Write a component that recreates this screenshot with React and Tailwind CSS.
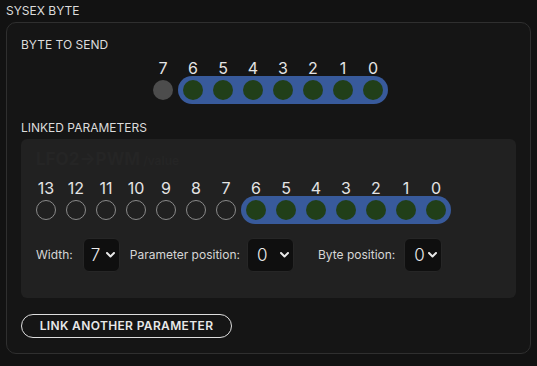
import React from "react";

const topBits = [7, 6, 5, 4, 3, 2, 1, 0];
const paramBits = [13, 12, 11, 10, 9, 8, 7, 6, 5, 4, 3, 2, 1, 0];

function Chevron() {
  return (
    <svg width="9" height="6" viewBox="0 0 9 6" className="shrink-0">
      <polyline points="1,1 4.5,4.5 8,1" fill="none" stroke="#e8e8e8" strokeWidth="2" strokeLinecap="round" strokeLinejoin="round" />
    </svg>
  );
}

function FakeSelect({ value, widthClass, padClass }) {
  return (
    <div className={`h-[34px] ${widthClass} ${padClass} pr-[4px] flex items-center justify-between rounded-[6px] border border-[#262626] bg-[#0f0f0f]`}>
      <span className="text-[17px] font-light leading-none text-[#ececec]">{value}</span>
      <Chevron />
    </div>
  );
}

function Labels({ bits }) {
  return (
    <div className="flex gap-[10px] text-[16px] leading-[16px] text-[#e4e4e4]">
      {bits.map((b, i) => (
        <span key={i} className="w-[20px] text-center">{b}</span>
      ))}
    </div>
  );
}

function Dot({ on, empty }) {
  if (empty) return <div className="w-[20px] h-[20px] rounded-full border border-[#8a8a8a] shrink-0" />;
  if (on) return <div className="w-[20px] h-[20px] rounded-full bg-[#213f19] shrink-0" />;
  return <div className="w-[20px] h-[20px] rounded-full bg-[#4c4c4c] shrink-0" />;
}

function BitRow({ bits, activeCount, emptyStyle }) {
  const inactive = bits.slice(0, bits.length - activeCount);
  const active = bits.slice(bits.length - activeCount);
  return (
    <div>
      <Labels bits={bits} />
      <div className="flex items-center">
        {inactive.map((b, i) => (
          <div key={b} className={i > 0 ? "ml-[10px]" : ""}>
            <Dot empty={emptyStyle} />
          </div>
        ))}
        <div className="ml-[5px] h-[28px] px-[5px] flex items-center gap-[10px] rounded-full bg-[#385a9b]">
          {active.map((b) => (
            <Dot key={b} on />
          ))}
        </div>
      </div>
    </div>
  );
}

export default function App() {
  return (
    <div className="w-[537px] h-[366px] bg-[#121212] font-['Inter','Noto_Sans',sans-serif] text-[#dcdcdc] pt-[2px]">
      <div className="px-[6px] text-[12px] leading-[18px]">SYSEX BYTE</div>
      <div className="mx-[6px] mt-[2px] h-[332px] rounded-[10px] border border-[#2f2f2f] bg-[#151515] px-[14px] pt-[13px]">
        <div className="text-[12px] leading-[18px]">BYTE TO SEND</div>
        <div className="mt-[6px] ml-[132px]">
          <BitRow bits={topBits} activeCount={7} />
        </div>

        <div className="mt-[15px] text-[12px] leading-[18px]">LINKED PARAMETERS</div>
        <div className="mt-[2px] h-[159px] rounded-[6px] bg-[#212121] px-[15px] pt-[9px]">
          <div className="text-[#252525] leading-[22px]">
            <span className="text-[17px] font-bold">LFO2-&gt;PWM</span>
            <span className="text-[12px] font-semibold"> /value</span>
          </div>
          <div className="mt-[8px]">
            <BitRow bits={paramBits} activeCount={7} emptyStyle />
          </div>
          <div className="mt-[14px] flex items-center text-[12px] text-[#d6d6d6]">
            <span>Width:</span>
            <div className="ml-[10px]">
              <FakeSelect value="7" widthClass="w-[37px]" padClass="pl-[7px]" />
            </div>
            <span className="ml-[10px]">Parameter position:</span>
            <div className="ml-[7px]">
              <FakeSelect value="0" widthClass="w-[47px]" padClass="pl-[9px]" />
            </div>
            <span className="ml-[24px]">Byte position:</span>
            <div className="ml-[9px]">
              <FakeSelect value="0" widthClass="w-[38px]" padClass="pl-[9px]" />
            </div>
          </div>
        </div>

        <button className="mt-[16px] w-[211px] h-[24px] rounded-full border-[1.5px] border-[#dedede] text-[12px] font-semibold tracking-[0.03em] text-[#e8e8e8] flex items-center justify-center">
          LINK ANOTHER PARAMETER
        </button>
      </div>
    </div>
  );
}
